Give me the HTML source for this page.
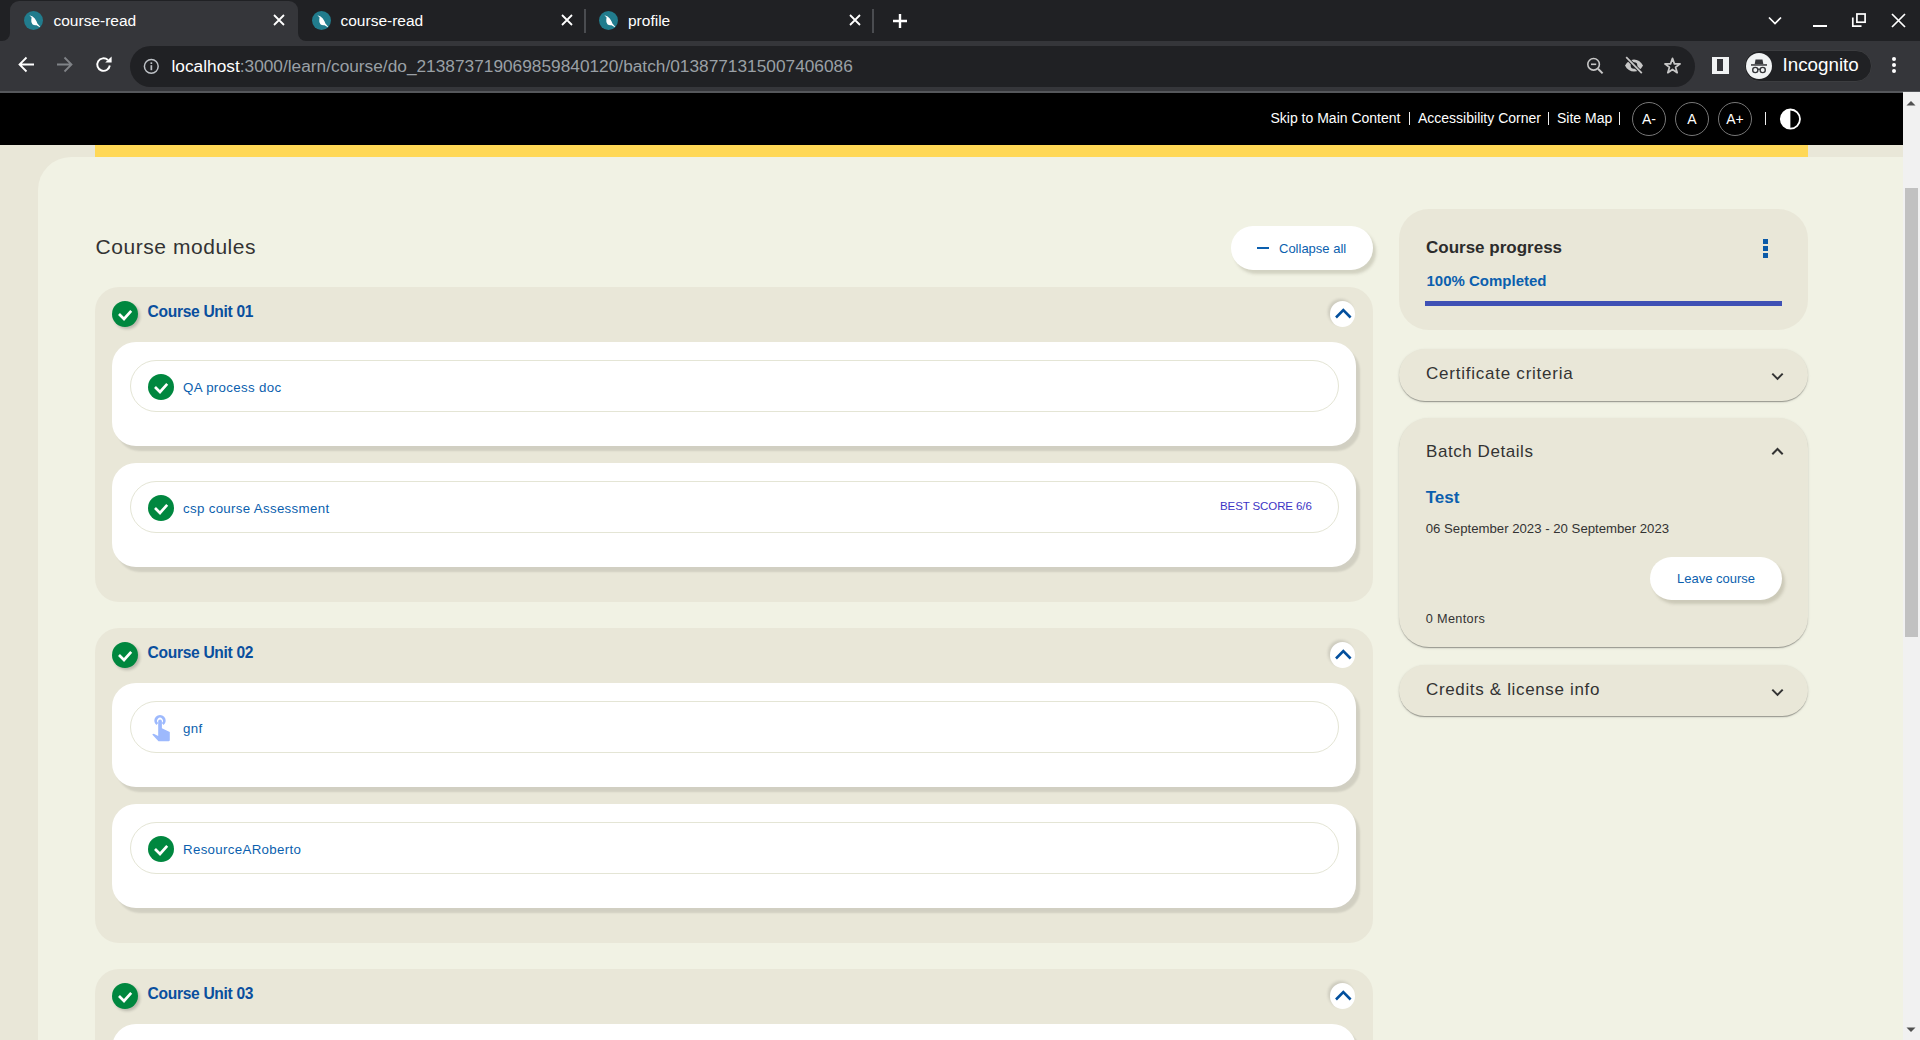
<!DOCTYPE html>
<html><head><meta charset="utf-8">
<style>
*{box-sizing:border-box;margin:0;padding:0}
html,body{width:1920px;height:1040px;overflow:hidden;font-family:"Liberation Sans",sans-serif;background:#f1f2e4}
.a{position:absolute}
.t{position:absolute;white-space:nowrap;line-height:1}
svg{position:absolute;overflow:visible}
/* chrome */
#tabbar{left:0;top:0;width:1920px;height:41px;background:#202124}
#toolbar{left:0;top:41px;width:1920px;height:50px;background:#35363a}
#tbline{left:0;top:91px;width:1920px;height:2px;background:#55575b}
.fav{position:absolute;width:19px;height:19px;border-radius:50%;background:#217c8d;top:11px}
.ttl{color:#fff;font-size:15.5px;top:13px}
.sep{position:absolute;top:9px;width:2px;height:24px;background:#4a4c50}
#omni{left:130px;top:46px;width:1565px;height:41px;border-radius:21px;background:#202124}
/* page */
#hdr{left:0;top:93px;width:1903px;height:52px;background:#000}
.hl{color:#fff;font-size:14px;top:111.3px}
.pipe{position:absolute;top:112px;width:1.2px;height:13px;background:#eee}
.circ{position:absolute;top:102px;width:34px;height:34px;border:1.2px solid #777;border-radius:50%}
.circ span{position:absolute;left:0;right:0;top:8.7px;text-align:center;color:#fff;font-size:14px;line-height:1}
#strip{left:0;top:145px;width:1903px;height:12px;background:#e9e7d8}
#yellow{left:95px;top:145px;width:1713px;height:12px;background:#ffd856}
#leftbg{left:0;top:157px;width:120px;height:883px;background:#e9e7d8}
#card{left:38px;top:157px;width:1865px;height:900px;background:#f1f2e4;border-top-left-radius:33px}
#sb{left:1903px;top:92px;width:17px;height:948px;background:#f1f1f1}
#thumb{left:1905px;top:188px;width:13px;height:449px;background:#c1c1c1}
.module{position:absolute;left:95px;width:1278px;height:315px;background:#e9e7d8;border-radius:24px}
.wcard{position:absolute;left:17px;width:1244px;height:104px;background:#fff;border-radius:24px;box-shadow:4px 5px 2px rgba(0,0,0,.1)}
.pill{position:absolute;left:18px;top:18px;width:1209px;height:52px;border:1px solid #e4e5d5;border-radius:26px}
.chk{position:absolute;width:26px;height:26px;border-radius:50%;background:#00873f}
.chk svg{left:0;top:0}
.chk.sh{box-shadow:2px 2px 3px rgba(0,0,0,.2)}
.unit{left:52.6px;top:16.8px;font-size:15.6px;font-weight:700;color:#0a4f9e;letter-spacing:-.32px}
.ctitle{left:52px;top:20.3px;font-size:13.3px;color:#0b5fae;letter-spacing:.32px}
.upbtn{position:absolute;left:1235px;top:14px;width:25px;height:26px;border-radius:50%;background:#fff;box-shadow:-2px -2px 3px rgba(0,0,0,.12)}
.rcard{position:absolute;left:1399px;width:409px;background:#e9e7d8;border-radius:30px}
.rcard.el{box-shadow:0 2px 1px -1px rgba(0,0,0,.2),0 1px 1px 0 rgba(0,0,0,.14),0 1px 3px 0 rgba(0,0,0,.12)}
.dk{color:#333}
</style></head><body>
<!-- ================= Chrome tab bar ================= -->
<div id="tabbar" class="a"></div>
<div class="a" style="left:10px;top:1px;width:288px;height:40px;background:#35363a;border-radius:9px 9px 0 0"></div>
<div class="a" style="left:2px;top:33px;width:8px;height:8px;background:#35363a"></div>
<div class="a" style="left:0px;top:25px;width:10px;height:16px;background:#202124;border-bottom-right-radius:8px"></div>
<div class="a" style="left:298px;top:33px;width:8px;height:8px;background:#35363a"></div>
<div class="a" style="left:298px;top:25px;width:10px;height:16px;background:#202124;border-bottom-left-radius:8px"></div>

<div class="fav" style="left:24px"><svg style="left:0;top:0" width="19" height="19" viewBox="0 0 19 19"><path d="M5.4 4.2L8.6 5.4Q11 6.6 12.6 10.6L13.4 12.6L16.2 15.8L15.4 16L12.6 14.2Q10 14.6 8.4 13.2Q6.9 11.4 7.3 8.6L7.6 6.6Z" fill="#fff"/></svg></div>
<div class="t ttl" style="left:53.5px">course-read</div>
<svg style="left:273px;top:14px" width="12" height="12" viewBox="0 0 12 12"><path d="M1 1L11 11M11 1L1 11" stroke="#fff" stroke-width="1.8"/></svg>

<div class="fav" style="left:311.5px"><svg style="left:0;top:0" width="19" height="19" viewBox="0 0 19 19"><path d="M5.4 4.2L8.6 5.4Q11 6.6 12.6 10.6L13.4 12.6L16.2 15.8L15.4 16L12.6 14.2Q10 14.6 8.4 13.2Q6.9 11.4 7.3 8.6L7.6 6.6Z" fill="#fff"/></svg></div>
<div class="t ttl" style="left:340.5px">course-read</div>
<svg style="left:561px;top:14px" width="12" height="12" viewBox="0 0 12 12"><path d="M1 1L11 11M11 1L1 11" stroke="#fff" stroke-width="1.8"/></svg>
<div class="sep" style="left:584px"></div>

<div class="fav" style="left:598.5px"><svg style="left:0;top:0" width="19" height="19" viewBox="0 0 19 19"><path d="M5.4 4.2L8.6 5.4Q11 6.6 12.6 10.6L13.4 12.6L16.2 15.8L15.4 16L12.6 14.2Q10 14.6 8.4 13.2Q6.9 11.4 7.3 8.6L7.6 6.6Z" fill="#fff"/></svg></div>
<div class="t ttl" style="left:628px">profile</div>
<svg style="left:849px;top:14px" width="12" height="12" viewBox="0 0 12 12"><path d="M1 1L11 11M11 1L1 11" stroke="#fff" stroke-width="1.8"/></svg>
<div class="sep" style="left:872px"></div>
<svg style="left:892px;top:13px" width="16" height="16" viewBox="0 0 16 16"><path d="M8 1V15M1 8H15" stroke="#fff" stroke-width="2.4"/></svg>

<!-- window controls -->
<svg style="left:1768px;top:16px" width="14" height="9" viewBox="0 0 14 9"><path d="M1 1.5L7 7.5L13 1.5" stroke="#fff" stroke-width="1.7" fill="none"/></svg>
<div class="a" style="left:1813px;top:25px;width:14px;height:2px;background:#fff"></div>
<svg style="left:1851px;top:12px" width="16" height="16" viewBox="0 0 16 16"><rect x="5.9" y="2" width="8.2" height="8.2" stroke="#fff" stroke-width="1.7" fill="none"/><path d="M1.8 5.5V14.2H10.5" stroke="#fff" stroke-width="1.7" fill="none"/></svg>
<svg style="left:1891px;top:13px" width="15" height="15" viewBox="0 0 15 15"><path d="M1 1L14 14M14 1L1 14" stroke="#fff" stroke-width="1.7"/></svg>

<!-- ================= toolbar ================= -->
<div id="toolbar" class="a"></div>
<svg style="left:18px;top:56px" width="17" height="17" viewBox="0 0 17 17"><path d="M16 8.5H2M8.5 1.5L1.5 8.5L8.5 15.5" stroke="#fff" stroke-width="1.8" fill="none"/></svg>
<svg style="left:56px;top:56px" width="17" height="17" viewBox="0 0 17 17"><path d="M1 8.5H15M8.5 1.5L15.5 8.5L8.5 15.5" stroke="#808387" stroke-width="1.8" fill="none"/></svg>
<svg style="left:95px;top:56px" width="18" height="18" viewBox="0 0 18 18"><path d="M14.8 9.5A6.3 6.3 0 1 1 12.9 4" stroke="#fff" stroke-width="1.9" fill="none"/><path d="M10.2 6.6H16.6V0.6Z" fill="#fff"/></svg>
<div id="omni" class="a"></div>
<svg style="left:143px;top:58px" width="17" height="17" viewBox="0 0 17 17"><circle cx="8.3" cy="8.3" r="6.9" stroke="#bdc1c6" stroke-width="1.5" fill="none"/><rect x="7.5" y="7.2" width="1.7" height="5" fill="#bdc1c6"/><rect x="7.5" y="4.3" width="1.7" height="1.7" fill="#bdc1c6"/></svg>
<div class="t" style="left:171.5px;top:57.8px;font-size:17.3px;color:#9aa0a6"><span style="color:#fff">localhost</span>:3000/learn/course/do_213873719069859840120/batch/0138771315007406086</div>

<!-- omnibox right icons -->
<svg style="left:1584px;top:55px" width="20" height="20" viewBox="0 0 20 20"><circle cx="9.6" cy="9.3" r="5.8" stroke="#c7c7c7" stroke-width="1.6" fill="none"/><path d="M7 9.3H12.2" stroke="#c7c7c7" stroke-width="1.6"/><path d="M14 13.8L18.6 18.4" stroke="#c7c7c7" stroke-width="2"/></svg>
<svg style="left:1624px;top:56px" width="20" height="20" viewBox="0 0 20 20"><path d="M1 9.5C3 5.5 6.5 3.5 10 3.5S17 5.5 19 9.5C17 13.5 13.5 15.5 10 15.5S3 13.5 1 9.5Z" fill="#c7c7c7"/><circle cx="10" cy="9.5" r="3.3" fill="#202124"/><path d="M2.2 1.2L17.8 17.2" stroke="#202124" stroke-width="3.4"/><path d="M2.2 1.2L17.8 17.2" stroke="#c7c7c7" stroke-width="1.7"/></svg>
<svg style="left:1663px;top:56px" width="19" height="19" viewBox="0 0 19 19"><path d="M9.5 2.4L11.44 7.9H17.1L12.58 11.25L14.2 16.7L9.5 13.45L4.8 16.7L6.42 11.25L1.9 7.9H7.56Z" stroke="#c7c7c7" stroke-width="1.7" fill="none" stroke-linejoin="round"/></svg>
<!-- side panel -->
<div class="a" style="left:1712px;top:56.5px;width:17px;height:17px;background:#f1f3f4"></div>
<div class="a" style="left:1717px;top:59px;width:6px;height:12px;background:#35363a"></div>
<!-- incognito pill -->
<div class="a" style="left:1743.5px;top:50px;width:128px;height:32px;border-radius:16px;background:#202124;border:1px solid #3c3d40"></div>
<div class="a" style="left:1746px;top:53px;width:26px;height:26px;border-radius:50%;background:#f1f3f4"></div>
<svg style="left:1746px;top:53px" width="26" height="26" viewBox="0 0 26 26"><path d="M9.5 6.5H16.5L17.3 11H8.7Z" fill="#35363a"/><rect x="5" y="11.2" width="16" height="1.5" fill="#35363a"/><circle cx="9.3" cy="17" r="2.6" stroke="#35363a" stroke-width="1.4" fill="none"/><circle cx="16.7" cy="17" r="2.6" stroke="#35363a" stroke-width="1.4" fill="none"/><path d="M11.8 16.5Q13 15.6 14.2 16.5" stroke="#35363a" stroke-width="1.2" fill="none"/></svg>
<div class="t" style="left:1782.5px;top:56.3px;font-size:18.8px;color:#fff">Incognito</div>
<div class="a" style="left:1891.6px;top:56.75px;width:4px;height:4px;border-radius:50%;background:#fff"></div>
<div class="a" style="left:1891.6px;top:63px;width:4px;height:4px;border-radius:50%;background:#fff"></div>
<div class="a" style="left:1891.6px;top:69.1px;width:4px;height:4px;border-radius:50%;background:#fff"></div>
<div id="tbline" class="a"></div>

<!-- ================= page ================= -->
<div id="hdr" class="a"></div>
<div class="t hl" style="left:1270.5px">Skip to Main Content</div>
<div class="pipe" style="left:1409px"></div>
<div class="t hl" style="left:1418px">Accessibility Corner</div>
<div class="pipe" style="left:1548px"></div>
<div class="t hl" style="left:1557px">Site Map</div>
<div class="pipe" style="left:1619px"></div>
<div class="circ" style="left:1632px"><span>A-</span></div>
<div class="circ" style="left:1675px"><span>A</span></div>
<div class="circ" style="left:1718px"><span>A+</span></div>
<div class="pipe" style="left:1764.5px"></div>
<svg style="left:1779px;top:108px" width="23" height="23" viewBox="0 0 23 23"><circle cx="11.4" cy="11.1" r="9.6" stroke="#fff" stroke-width="1.8" fill="#000"/><path d="M11.4 1.5A9.6 9.6 0 0 0 11.4 20.7Z" fill="#fff"/></svg>

<div id="strip" class="a"></div>
<div id="yellow" class="a"></div>
<div id="leftbg" class="a"></div>
<div id="card" class="a"></div>
<div id="sb" class="a"></div>
<svg style="left:1905px;top:99px" width="12" height="8" viewBox="0 0 12 8"><path d="M1.5 6.5L6 2L10.5 6.5Z" fill="#505050"/></svg>
<svg style="left:1905px;top:1026px" width="12" height="8" viewBox="0 0 12 8"><path d="M1.5 1.5L6 6L10.5 1.5Z" fill="#505050"/></svg>
<div id="thumb" class="a"></div>

<div class="t dk" style="left:95.5px;top:236.4px;font-size:21px;letter-spacing:.55px;color:#333">Course modules</div>

<!-- collapse all -->
<div class="a" style="left:1231px;top:226px;width:142px;height:44px;border-radius:22px;background:#fff;box-shadow:3px 4px 3px rgba(120,115,90,.25)"></div>
<div class="a" style="left:1257px;top:247px;width:12px;height:2px;background:#0b5fae"></div>
<div class="t" style="left:1279px;top:242.1px;font-size:13px;color:#0b5fae">Collapse all</div>

<!-- module 1 -->
<div class="module" style="top:287px">
  <div class="chk sh" style="left:17px;top:14px"><svg width="26" height="26" viewBox="0 0 26 26"><path d="M7 13L12 18L19.2 9.8" stroke="#fff" stroke-width="2.7" fill="none"/></svg></div>
  <div class="t unit">Course Unit 01</div>
  <div class="upbtn"><svg style="left:4.5px;top:6.5px" width="17" height="11" viewBox="0 0 17 11"><path d="M1 9.5L8.3 2.2L15.6 9.5" stroke="#024f9d" stroke-width="2.6" fill="none"/></svg></div>
  <div class="wcard" style="top:55px"><div class="pill"><div class="chk" style="left:17px;top:13px"><svg width="26" height="26" viewBox="0 0 26 26"><path d="M7 13L12 18L19.2 9.8" stroke="#fff" stroke-width="2.7" fill="none"/></svg></div><div class="t ctitle">QA process doc</div></div></div>
  <div class="wcard" style="top:176px"><div class="pill"><div class="chk" style="left:17px;top:13px"><svg width="26" height="26" viewBox="0 0 26 26"><path d="M7 13L12 18L19.2 9.8" stroke="#fff" stroke-width="2.7" fill="none"/></svg></div><div class="t ctitle">csp course Assessment</div>
    <div class="t" style="left:1089px;top:18.5px;font-size:11.5px;color:#3d34c4;letter-spacing:-.1px">BEST SCORE 6/6</div></div></div>
</div>
<!-- module 2 -->
<div class="module" style="top:628px">
  <div class="chk sh" style="left:17px;top:14px"><svg width="26" height="26" viewBox="0 0 26 26"><path d="M7 13L12 18L19.2 9.8" stroke="#fff" stroke-width="2.7" fill="none"/></svg></div>
  <div class="t unit">Course Unit 02</div>
  <div class="upbtn"><svg style="left:4.5px;top:6.5px" width="17" height="11" viewBox="0 0 17 11"><path d="M1 9.5L8.3 2.2L15.6 9.5" stroke="#024f9d" stroke-width="2.6" fill="none"/></svg></div>
  <div class="wcard" style="top:55px"><div class="pill">
    <svg style="left:19px;top:10.7px" width="20" height="28" viewBox="0 0 20 28"><path d="M6.4 12.1A5.7 5.7 0 1 1 13.6 12.1L11.8 10A2.9 2.9 0 1 0 8.2 10Z" fill="#9db9fd"/><path d="M8.2 23V8.35A1.85 1.85 0 0 1 11.9 8.35V15.3L19.8 19V27.4L18.8 28.3H8.5L2.2 21.6L3.6 20.7Z" fill="#9db9fd"/></svg>
    <div class="t ctitle">gnf</div></div></div>
  <div class="wcard" style="top:176px"><div class="pill"><div class="chk" style="left:17px;top:13px"><svg width="26" height="26" viewBox="0 0 26 26"><path d="M7 13L12 18L19.2 9.8" stroke="#fff" stroke-width="2.7" fill="none"/></svg></div><div class="t ctitle">ResourceARoberto</div></div></div>
</div>
<!-- module 3 -->
<div class="module" style="top:969px">
  <div class="chk sh" style="left:17px;top:14px"><svg width="26" height="26" viewBox="0 0 26 26"><path d="M7 13L12 18L19.2 9.8" stroke="#fff" stroke-width="2.7" fill="none"/></svg></div>
  <div class="t unit">Course Unit 03</div>
  <div class="upbtn"><svg style="left:4.5px;top:6.5px" width="17" height="11" viewBox="0 0 17 11"><path d="M1 9.5L8.3 2.2L15.6 9.5" stroke="#024f9d" stroke-width="2.6" fill="none"/></svg></div>
  <div class="wcard" style="top:55px"></div>
</div>

<!-- ================= right column ================= -->
<div class="rcard" style="top:209px;height:121px"></div>
<div class="t" style="left:1426px;top:238.5px;font-size:17px;font-weight:700;color:#2c2c2c">Course progress</div>
<div class="a" style="left:1763px;top:238.5px;width:5px;height:5px;background:#0b5aa8"></div>
<div class="a" style="left:1763px;top:246px;width:5px;height:5px;background:#0b5aa8"></div>
<div class="a" style="left:1763px;top:253px;width:5px;height:5px;background:#0b5aa8"></div>
<div class="t" style="left:1426.5px;top:273.2px;font-size:15px;font-weight:700;color:#0b5fae">100% Completed</div>
<div class="a" style="left:1425px;top:301px;width:357px;height:5px;background:#3f51b5"></div>

<div class="rcard el" style="top:349px;height:52px;border-radius:27px"></div>
<div class="t dk" style="left:1426px;top:365.2px;font-size:17px;letter-spacing:.76px">Certificate criteria</div>
<svg style="left:1771px;top:372px" width="13" height="10" viewBox="0 0 13 10"><path d="M1.3 1.6L6.5 6.9L11.7 1.6" stroke="#333" stroke-width="2" fill="none"/></svg>

<div class="rcard el" style="top:418px;height:229px"></div>
<div class="t dk" style="left:1426px;top:443.3px;font-size:17px;letter-spacing:.56px">Batch Details</div>
<svg style="left:1771px;top:446px" width="13" height="10" viewBox="0 0 13 10"><path d="M1.3 8.3L6.5 3L11.7 8.3" stroke="#333" stroke-width="2" fill="none"/></svg>
<div class="t" style="left:1425.7px;top:488.7px;font-size:17px;font-weight:700;color:#0b5fae">Test</div>
<div class="t dk" style="left:1425.7px;top:521.7px;font-size:13.2px">06 September 2023 - 20 September 2023</div>
<div class="a" style="left:1650px;top:557px;width:132px;height:43px;border-radius:22px;background:#fff;box-shadow:3px 4px 3px rgba(120,115,90,.25)"></div>
<div class="t" style="left:1677px;top:572px;font-size:13px;color:#0b5fae">Leave course</div>
<div class="t dk" style="left:1425.7px;top:613px;font-size:12.7px;letter-spacing:.35px">0 Mentors</div>

<div class="rcard el" style="top:665px;height:51px;border-radius:26px"></div>
<div class="t dk" style="left:1426px;top:681.1px;font-size:17px;letter-spacing:.65px">Credits &amp; license info</div>
<svg style="left:1771px;top:688px" width="13" height="10" viewBox="0 0 13 10"><path d="M1.3 1.6L6.5 6.9L11.7 1.6" stroke="#333" stroke-width="2" fill="none"/></svg>
</body></html>
